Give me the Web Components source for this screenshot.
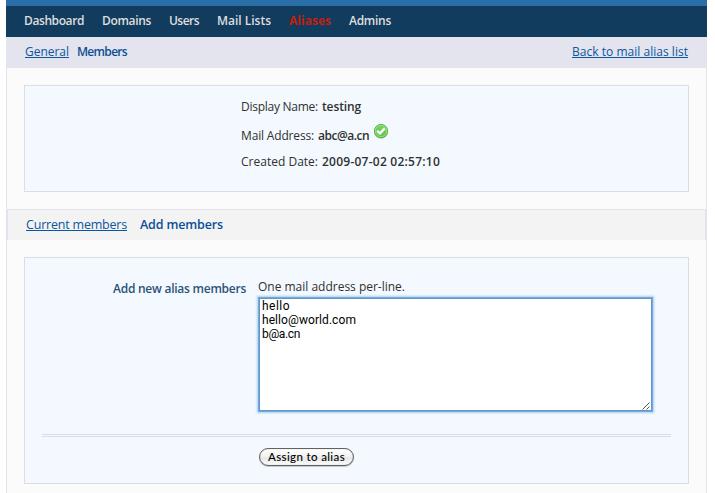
<!DOCTYPE html>
<html lang="en"><head><meta charset="utf-8"><title>Mail alias members</title>
<style>
html{background:#fff}
body{margin:0;height:493px;overflow:hidden;font:12px/16px "Open Sans","Noto Sans",sans-serif;color:#303030}
</style></head><body>
<alias-page></alias-page>
<script>
// Text whose letter spacing is adjusted so that it fills the width in w.
class FitText extends HTMLElement{
  constructor(){super();this.attachShadow({mode:'open'}).innerHTML=`<style>
  :host{display:block;white-space:pre;flex:none;height:16px;line-height:16px}
  :host([link]) span{text-decoration:underline;text-decoration-thickness:1px;text-underline-offset:1px;text-decoration-skip-ink:none}
  :host([link]){color:#0b56a0}:host([strong]){font-weight:600}
  span{display:inline-block}
  </style><span><slot></slot></span>`}
  connectedCallback(){
    const w=+this.getAttribute('w'),s=this.shadowRoot.querySelector('span');
    const n=this.textContent.length,cur=s.getBoundingClientRect().width;
    s.style.letterSpacing=(w-cur)/n+'px';this.style.width=w+'px';
  }
}
class NavBar extends HTMLElement{
  constructor(){super();this.attachShadow({mode:'open'}).innerHTML=`<style>
  :host{display:flex;box-sizing:border-box;gap:18px;height:37px;border-top:6px solid #2a6fa8;background:#123c5e;color:#dedede;padding:7px 18px 0}
  </style><slot></slot>`}
}
class SubBar extends HTMLElement{
  constructor(){super();this.attachShadow({mode:'open'}).innerHTML=`<style>
  :host{display:flex;box-sizing:border-box;height:31px;background:#e3e4ed;color:#0b4f96;padding:7px 19px 0;gap:8px}
  :host([inner]){background:#f3f3f3;border:1px solid #e0e3ec;border-bottom:0;padding:7px 18px 0;gap:13px;font-size:12.5px}
  ::slotted([end]){margin-left:auto}
  </style><slot></slot>`}
}
class InfoPanel extends HTMLElement{
  constructor(){super();this.attachShadow({mode:'open'}).innerHTML=`<style>
  :host{display:block;box-sizing:border-box;margin:17px;background:#f3f9fe;border:1px solid #d8dfe4}
  </style><slot></slot>`}
}
class OkIcon extends HTMLElement{
  constructor(){super();this.attachShadow({mode:'open'}).innerHTML=`<style>:host{display:block;width:16px;height:16px}svg{display:block}</style>
  <svg width="16" height="16" viewBox="0 0 16 16"><defs><linearGradient id="g" x2="0" y2="1"><stop stop-color="#80cf67"/><stop offset="1" stop-color="#5cc446"/></linearGradient></defs>
  <ellipse cx="8" cy="9" rx="7" ry="6.7" fill="#7d9678" opacity=".55"/><circle cx="8" cy="8" r="6.6" fill="url(#g)" stroke="#55b43e"/><circle cx="8" cy="8" r="5.7" fill="none" stroke="#a4e48d" stroke-width=".8"/>
  <path d="M4.2 7.9 7 10.3 11.7 5.4" fill="none" stroke="#fff" stroke-width="2.3"/></svg>`}
}
class MemberInput extends HTMLElement{
  constructor(){super();this.attachShadow({mode:'open'}).innerHTML=`<style>
  :host{display:grid;grid-template-columns:1fr;box-sizing:border-box;width:393px;height:113px;margin-left:1px;background:#fff;border:1px solid #6496c7;box-shadow:0 0 0 1px #72aade,0 0 2px 2px #a9cdee;color:#000;font-family:Roboto,sans-serif}
  .t{grid-area:1/1;padding:0 0 0 2px}.t ::slotted(*){height:14px!important;line-height:14px!important}
  svg{grid-area:1/1;align-self:end;justify-self:end;display:block}
  </style><div class="t"><slot></slot></div><svg width="9" height="9" viewBox="0 0 9 9"><path d="M.5 8.5 7.5 1.5M4.5 8.5 7.5 5.5" stroke="#555" stroke-width="1"/></svg>`}
}
class PushButton extends HTMLElement{
  constructor(){super();this.attachShadow({mode:'open'}).innerHTML=`<style>
  :host{display:block}
  button{display:flex;justify-content:center;align-items:center;width:95px;height:18px;padding:0;border:1px solid #626262;border-radius:9px;background:linear-gradient(#fff,#f3f3f3 45%,#e7e7e7 55%,#fbfbfb);color:#000;font:500 11.5px/16px "Lato",sans-serif;box-shadow:0 1px 0 #c4c9cc,inset 0 0 1px #999}
  </style><button type="button"><slot></slot></button>`}
}
class AliasPage extends HTMLElement{
  constructor(){super();this.attachShadow({mode:'open'}).innerHTML=`<style>
  :host{display:block;width:701px;margin-left:6px}
  .body{box-sizing:border-box;height:425px;border:solid #e0e5ec;border-width:0 1px;background:#fbfbfb;display:flow-root}
  .info{height:107px}.form{height:227px}
  .rows{display:grid;grid-template-rows:24px 31px 16px;padding:13px 0 0 216px}.row{display:flex;gap:4px}
  .mid{align-items:flex-start}.mid fit-text{margin-top:5px}
  .field{display:grid;grid-template-columns:221px 394px;column-gap:12px;padding-top:21px}
  .label{justify-self:end;color:#2c5378;margin-top:2px}
  .hint{margin-bottom:3px}
  .rule{height:1px;border:solid #d8dfe4;border-width:1px 0;margin:23px 17px 11px}
  push-button{margin-left:234px}
  </style>
  <nav-bar><fit-text strong w="60">Dashboard</fit-text><fit-text strong w="49">Domains</fit-text><fit-text strong w="30">Users</fit-text><fit-text strong w="54">Mail Lists</fit-text><fit-text strong w="42" style="color:#c12010;font-weight:700">Aliases</fit-text><fit-text strong w="42">Admins</fit-text></nav-bar>
  <sub-bar><fit-text link w="44">General</fit-text><fit-text strong w="50">Members</fit-text><fit-text end link w="116">Back to mail alias list</fit-text></sub-bar>
  <div class="body">
  <info-panel class="info"><div class="rows">
   <div class="row"><fit-text w="77">Display Name:</fit-text><fit-text strong w="39">testing</fit-text></div>
   <div class="row mid"><fit-text w="73">Mail Address:</fit-text><fit-text strong w="51">abc@a.cn</fit-text><ok-icon></ok-icon></div>
   <div class="row"><fit-text w="77">Created Date:</fit-text><fit-text strong w="118">2009-07-02 02:57:10</fit-text></div>
  </div></info-panel>
  <sub-bar inner><fit-text link w="101">Current members</fit-text><fit-text strong w="83">Add members</fit-text></sub-bar>
  <info-panel class="form"><div class="field"><fit-text class="label" strong w="133">Add new alias members</fit-text><div>
   <fit-text class="hint" w="147">One mail address per-line.</fit-text>
   <member-input><fit-text w="28">hello</fit-text><fit-text w="94">hello@world.com</fit-text><fit-text w="38">b@a.cn</fit-text></member-input></div></div>
   <div class="rule"></div><push-button><fit-text w="77">Assign to alias</fit-text></push-button>
  </info-panel></div>`}
}
for(const [n,c] of [['nav-bar',NavBar],['sub-bar',SubBar],['info-panel',InfoPanel],['ok-icon',OkIcon],['member-input',MemberInput],['push-button',PushButton],['fit-text',FitText],['alias-page',AliasPage]])customElements.define(n,c);
</script></body></html>
